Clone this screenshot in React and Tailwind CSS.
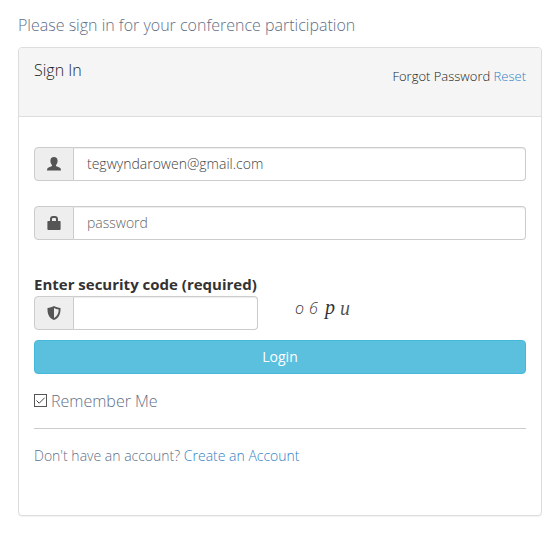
import React from 'react';

function UserIcon() {
  return (
    <svg viewBox="0 0 14 14" className="h-[14px] w-[14px]" fill="currentColor" aria-hidden="true">
      <path d="M7 0C4.700 0 3.400 1.500 3.400 3.700c0 1.700.6 3.200 1.500 4.200.3.500.3 1-.3 1.300L1.600 10.600C.5 11.100 0 12 0 13.500h14c0-1.500-.5-2.400-1.600-2.900L9.400 9.200c-.6-.3-.6-.8-.3-1.300.9-1 1.500-2.500 1.500-4.200C10.600 1.500 9.300 0 7 0z" />
    </svg>
  );
}

function LockIcon() {
  return (
    <svg viewBox="0 0 14 14" className="h-[14px] w-[14px]" fill="currentColor" aria-hidden="true">
      <path
        fillRule="evenodd"
        d="M1 5h2V3C3 1.200 4.200 0 6 0h2c1.800 0 3 1.200 3 3v2h2c.4 0 .6.300.6.700V13c0 .6-.3 1-.9 1H1.300c-.6 0-.9-.4-.9-1V5.700c0-.4.2-.7.600-.7zm4 0h4V3.300C9 2.400 8.500 2 7.700 2H6.300C5.500 2 5 2.400 5 3.300z"
      />
    </svg>
  );
}

function ShieldIcon() {
  return (
    <svg viewBox="0 0 14 14" className="h-[14px] w-[14px]" fill="currentColor" aria-hidden="true">
      <path
        fillRule="evenodd"
        d="M7 0c2 1.200 4.200 1.800 6.500 2 .2 6-1.500 10-6.500 12C2 12 .3 8 .5 2 2.800 1.800 5 1.200 7 0zm0 2v10c3.200-1.700 4.700-4.300 4.700-8.400C10 3.400 8.500 2.900 7 2z"
      />
    </svg>
  );
}

function Field({ icon, className = '', ...inputProps }) {
  return (
    <div className={`flex h-[34px] ${className}`}>
      <span className="flex w-10 shrink-0 items-center justify-center rounded-l border border-[#ccc] bg-[#eee] text-[#555]">
        {icon}
      </span>
      <input
        className="min-w-0 flex-1 rounded-r border border-l-0 border-[#ccc] bg-white px-[13px] text-sm font-light text-[#444] shadow-[inset_0_1px_1px_rgba(0,0,0,0.075)] outline-none placeholder:text-[#666]"
        {...inputProps}
      />
    </div>
  );
}

export default function App() {
  return (
    <main className="px-[18px] pt-[13px] pb-4 font-['Open_Sans',sans-serif] font-light text-[#5f6f88]">
      <p className="text-base">Please sign in for your conference participation</p>

      <section className="mt-[10px] rounded border border-[#ddd] bg-white shadow-[0_1px_1px_rgba(0,0,0,0.05)]">
        <header className="flex items-start justify-between rounded-t-[3px] border-b border-[#ddd] bg-[#f5f5f5] px-[15px] pt-[10px] pb-[34px] text-[#222]">
          <h1 className="text-base">Sign In</h1>
          <p className="-mb-1 mt-2 text-[13px] leading-5">
            Forgot Password{' '}
            <a href="#reset" className="text-[#337fc4]">
              Reset
            </a>
          </p>
        </header>

        <form className="px-[15px] pt-[30px] pb-[49px]" onSubmit={(e) => e.preventDefault()}>
          <Field icon={<UserIcon />} type="email" aria-label="Email" defaultValue="tegwyndarowen@gmail.com" />
          <Field icon={<LockIcon />} className="mt-[25px]" type="password" aria-label="Password" placeholder="password" />

          <label htmlFor="code" className="mt-[33px] block pb-px text-[15px] leading-[22px] font-bold text-[#333]">
            Enter security code (required)
          </label>
          <div className="flex">
            <Field icon={<ShieldIcon />} className="w-[224px]" id="code" type="text" />
            <svg
              viewBox="0 0 64 34"
              className="ml-9 h-[34px] w-16 overflow-visible"
              role="img"
              aria-label="Security code"
              fill="#333"
              fontFamily="Open Sans, sans-serif"
              fontWeight="300"
              fontStyle="italic"
            >
              <text x="1" y="18" fontSize="16">o</text>
              <text x="15" y="18" fontSize="16">6</text>
              <text x="31" y="18" fontSize="20" fontFamily="Liberation Serif, serif" fontWeight="400">p</text>
              <text x="46" y="19" fontSize="20" fontFamily="Liberation Serif, serif" fontWeight="400" fillOpacity="0.85">u</text>
            </svg>
          </div>

          <button
            type="submit"
            className="mt-[10px] block h-[34px] w-full rounded border border-[#46b8da] bg-[#5bc0de] text-sm font-normal text-white"
          >
            Login
          </button>

          <label className="mt-[15px] flex items-center gap-1 text-base">
            <span className="-mt-[2px] grid">
              <input
                type="checkbox"
                defaultChecked
                className="peer col-start-1 row-start-1 h-[13px] w-[13px] appearance-none border border-[#555] bg-white"
              />
              <svg
                viewBox="0 0 13 13"
                className="pointer-events-none invisible col-start-1 row-start-1 h-[13px] w-[13px] peer-checked:visible"
                fill="none"
                stroke="#444"
                aria-hidden="true"
              >
                <path d="M2.500 6.500l2.700 2.700 5.500-5.500" />
              </svg>
            </span>
            Remember Me
          </label>

          <p className="mt-[15px] border-t border-[#ccc] pt-[17px] text-sm">
            Don't have an account?{' '}
            <a href="#create" className="text-[#337fc4]">
              Create an Account
            </a>
          </p>
        </form>
      </section>
    </main>
  );
}
